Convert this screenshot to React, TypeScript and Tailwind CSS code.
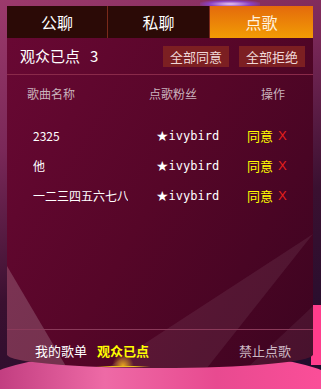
import React from "react";

const cjk = "font-['Microsoft_YaHei','Noto_Sans_CJK_SC',sans-serif]";

const rows = [
  { song: "2325", fan: "ivybird" },
  { song: "他", fan: "ivybird" },
  { song: "一二三四五六七八九十", fan: "ivybird" },
];

const App = () => {
  return (
    <div className={`relative w-[321px] h-[389px] overflow-hidden bg-[linear-gradient(160deg,#9c3a6c_0%,#7a2858_30%,#3a1030_60%,#1e0c2c_100%)] ${cjk}`}>
      <div className="absolute left-[200px] top-0 w-[60px] h-[8px] bg-[radial-gradient(ellipse,#e8c8f0,#8a40c0_50%,transparent_80%)]" />
      {/* stage */}
      <div className="absolute left-[-25px] right-[-25px] top-[350px] h-[80px] rounded-[50%] bg-[linear-gradient(90deg,#b83478,#ee6aa6_35%,#e84a90_65%,#ff4f9a)]" />
      <div className="absolute right-0 top-[305px] w-[10px] h-[60px] bg-[#ff3d8c]" />

      <div className="relative ml-[7px] mt-[6px] w-[306px] h-[362px] flex flex-col rounded-b-[160px_14px] overflow-hidden bg-[linear-gradient(120deg,#6a0834_0%,#560628_50%,#3c0420_100%)]">
        {/* light beams */}
        <svg className="absolute inset-0 pointer-events-none" width="306" height="362">
          <polygon points="306,228 100,362 200,362" fill="#ffffff" opacity="0.07" />
          <polygon points="306,300 240,362 306,362" fill="#ffffff" opacity="0.06" />
          <polygon points="0,260 0,362 60,362" fill="#ffffff" opacity="0.18" />
        </svg>

        <div className="relative flex h-[32px]">
          <div className="w-[101px] flex items-center justify-center bg-[#2b0a06] text-white text-[16px] border-r border-[#7a2a1a]">公聊</div>
          <div className="w-[102px] flex items-center justify-center bg-[#2b0a06] text-white text-[16px] border-r border-[#7a2a1a]">私聊</div>
          <div className="flex-1 flex items-center justify-center bg-[linear-gradient(180deg,#e46a0c,#f29c04)] text-[#fff3e0] text-[16px]">点歌</div>
        </div>

        <div className="relative flex items-center h-[37px] px-[13px] border-b border-[#8a2a4a]">
          <span className="text-white text-[15px]">观众已点&nbsp;&nbsp;&nbsp;3</span>
          <div className="ml-auto flex gap-[10px] mr-[-5px]">
            <button className="w-[66px] h-[21px] bg-[#7c1f22] text-[#f0d8d8] text-[13px] leading-[21px]">全部同意</button>
            <button className="w-[66px] h-[21px] bg-[#7c1f22] text-[#f0d8d8] text-[13px] leading-[21px]">全部拒绝</button>
          </div>
        </div>

        <div className="relative flex items-center h-[38px] text-[12px] text-[#c9b2bc]">
          <span className="ml-[20px] w-[122px]">歌曲名称</span>
          <span className="w-[112px]">点歌粉丝</span>
          <span>操作</span>
        </div>

        <div className="relative flex flex-col mt-[8px]">
          {rows.map((r, i) => (
            <div key={i} className="flex items-center h-[30px] text-white">
              <span className="ml-[26px] w-[95px] shrink-0 block overflow-hidden whitespace-nowrap text-[12px] font-['Noto_Sans_CJK_SC','DejaVu_Sans_Mono',monospace]">
                {r.song}
              </span>
              <span className="ml-[28px] w-[91px] shrink-0 flex items-center text-[12px] font-['DejaVu_Sans_Mono','Liberation_Mono',monospace]">
                <span className="text-[14px] leading-none font-['DejaVu_Sans',sans-serif]">★</span>
                {r.fan}
              </span>
              <span className="text-[13px] text-[#ffff00]">同意</span>
              <span className="ml-[5px] text-[13px] text-[#e8201a] font-['Liberation_Sans',sans-serif]">X</span>
            </div>
          ))}
        </div>

        <div className="relative mt-[118px] h-[28px] border-t border-[#8a3a5a] flex items-start pt-[11px] text-[13px]">
          <span className="ml-[28px] text-white">我的歌单</span>
          <div className="ml-[9px] relative flex flex-col items-center">
            <span className="text-[#ffff00] font-bold">观众已点</span>
            <div className="absolute top-[13px] w-[22px] h-[12px] bg-[radial-gradient(ellipse_at_bottom,#e8a820,transparent_70%)]" />
            <div className="mt-[5px] w-[54px] h-[1px] bg-[linear-gradient(90deg,transparent,#f0c020_30%,#f0c020_70%,transparent)]" />
          </div>
          <span className="ml-auto mr-[22px] text-[#cdb8c4]">禁止点歌</span>
        </div>
      </div>
    </div>
  );
};

export default App;
